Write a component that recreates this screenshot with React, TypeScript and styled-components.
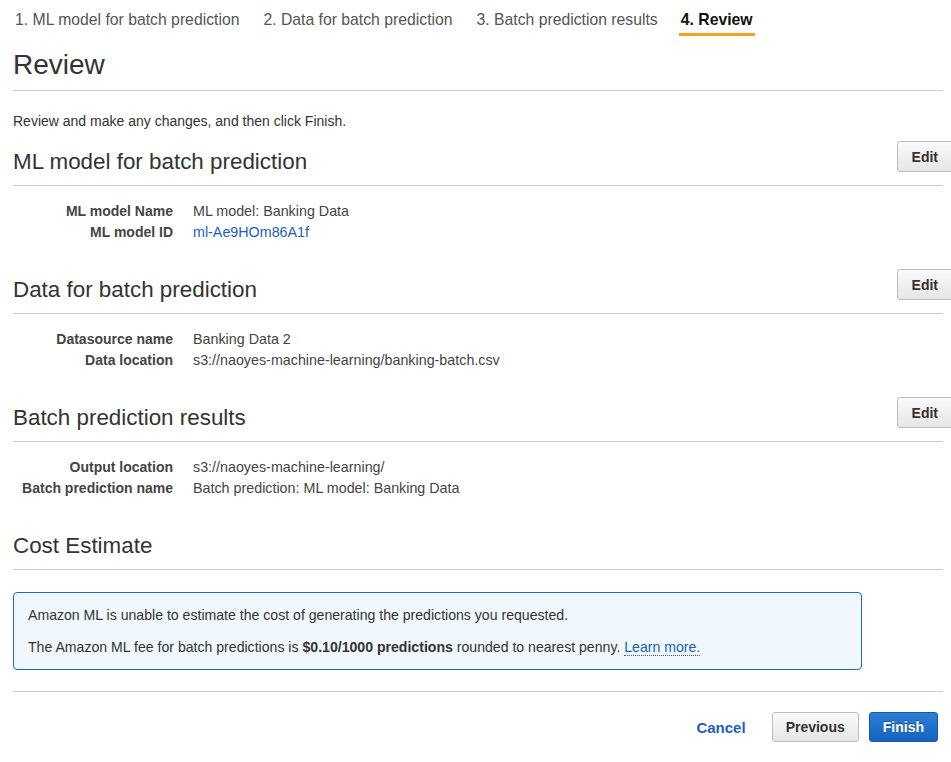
import React from "react";
import styled, { createGlobalStyle, css } from "styled-components";

const Global = createGlobalStyle`
  html, body { margin: 0; padding: 0; background: #fff; overflow: hidden; }
  body { font-family: "Liberation Sans", Arial, Helvetica, sans-serif; color: #444; }
`;

const Page = styled.div`
  width: 951px;
  box-sizing: border-box;
  padding: 10px 8px 0 13px;
`;

const Tabs = styled.nav`
  display: flex;
  gap: 18px;
  margin-left: -1px;
`;

const Tab = styled.div<{ $active?: boolean }>`
  font-size: 15.75px;
  line-height: 20px;
  padding: 0 3px 3px;
  border-bottom: 3px solid transparent;
  color: #555;
  white-space: nowrap;
  ${(p) =>
    p.$active &&
    css`
      color: #111;
      font-weight: bold;
      border-bottom-color: #f7a21b;
      padding: 0 2px 3px;
    `}
`;

const Title = styled.h1`
  margin: 13px 0 0;
  font-size: 28px;
  line-height: 32px;
  font-weight: normal;
  color: #333;
  padding-bottom: 9px;
  border-bottom: 1px solid #ccc;
`;

const Intro = styled.p`
  margin: 21px 0 0;
  font-size: 14px;
  line-height: 18px;
  color: #333;
`;

const Section = styled.section<{ $first?: boolean }>`
  margin-top: ${(p) => (p.$first ? "11px" : "26px")};
`;

const SectionHeader = styled.div`
  display: flex;
  justify-content: space-between;
  align-items: flex-end;
  min-height: 32px;
  padding-bottom: 12px;
  border-bottom: 1px solid #ccc;
`;

const SectionTitle = styled.h2`
  margin: 0;
  font-size: 22.4px;
  line-height: 24px;
  font-weight: normal;
  color: #333;
  position: relative;
  top: 1px;
`;

const Button = styled.button<{ $primary?: boolean }>`
  font-family: inherit;
  font-size: 14px;
  font-weight: bold;
  height: 30px;
  padding: 0 13px;
  border-radius: 3px;
  cursor: pointer;
  ${(p) =>
    p.$primary
      ? css`
          color: #fff;
          background: linear-gradient(#2d7fd6, #1462bd);
          border: 1px solid #145bb0;
          text-shadow: 0 -1px 0 rgba(0, 0, 0, 0.35);
        `
      : css`
          color: #333;
          background: linear-gradient(#fafafa, #e6e6e6);
          border: 1px solid #bdbdbd;
        `}
`;

const EditButton = styled(Button)`
  height: 31px;
  padding: 0 14px;
  margin-bottom: 1px;
  margin-right: -10px;
`;

const Details = styled.dl`
  display: grid;
  grid-template-columns: 160px 1fr;
  column-gap: 20px;
  margin: 15px 0 0;
  font-size: 14px;
  line-height: 21px;
`;

const Label = styled.dt`
  text-align: right;
  font-weight: bold;
  color: #444;
`;

const Value = styled.dd`
  margin: 0;
  color: #444;
  font-size: 14.3px;
`;

const Link = styled.a<{ $dotted?: boolean }>`
  color: #1a5fb8;
  text-decoration: none;
  ${(p) =>
    p.$dotted &&
    css`
      border-bottom: 1px dotted #1a5fb8;
    `}
`;

const InfoBox = styled.div`
  margin-top: 22px;
  width: 849px;
  box-sizing: border-box;
  padding: 12px 14px;
  background: #f0f7fe;
  border: 1px solid #1a6bc4;
  border-radius: 4px;
  font-size: 14.1px;
  line-height: 20px;
  color: #333;
`;

const InfoText = styled.p`
  margin: 0;
  & + & {
    margin-top: 12px;
  }
`;

const Footer = styled.div`
  margin-top: 21px;
  border-top: 1px solid #ccc;
  padding: 20px 5px 0 0;
  display: flex;
  justify-content: flex-end;
  align-items: center;
  gap: 10px;
`;

const CancelLink = styled.a`
  font-size: 15px;
  font-weight: bold;
  color: #1f5fb8;
  margin-right: 16px;
  cursor: pointer;
`;

type Row = [string, React.ReactNode];

const sections: { title: string; rows: Row[] }[] = [
  {
    title: "ML model for batch prediction",
    rows: [
      ["ML model Name", "ML model: Banking Data"],
      ["ML model ID", <Link href="#">ml-Ae9HOm86A1f</Link>],
    ],
  },
  {
    title: "Data for batch prediction",
    rows: [
      ["Datasource name", "Banking Data 2"],
      ["Data location", "s3://naoyes-machine-learning/banking-batch.csv"],
    ],
  },
  {
    title: "Batch prediction results",
    rows: [
      ["Output location", "s3://naoyes-machine-learning/"],
      ["Batch prediction name", "Batch prediction: ML model: Banking Data"],
    ],
  },
];

export default function App() {
  return (
    <Page>
      <Global />
      <Tabs>
        <Tab>1. ML model for batch prediction</Tab>
        <Tab>2. Data for batch prediction</Tab>
        <Tab>3. Batch prediction results</Tab>
        <Tab $active>4. Review</Tab>
      </Tabs>
      <Title>Review</Title>
      <Intro>Review and make any changes, and then click Finish.</Intro>
      {sections.map((s, i) => (
        <Section key={s.title} $first={i === 0}>
          <SectionHeader>
            <SectionTitle>{s.title}</SectionTitle>
            <EditButton>Edit</EditButton>
          </SectionHeader>
          <Details>
            {s.rows.map(([k, v]) => (
              <React.Fragment key={k}>
                <Label>{k}</Label>
                <Value>{v}</Value>
              </React.Fragment>
            ))}
          </Details>
        </Section>
      ))}
      <Section>
        <SectionHeader>
          <SectionTitle>Cost Estimate</SectionTitle>
        </SectionHeader>
        <InfoBox>
          <InfoText>
            Amazon ML is unable to estimate the cost of generating the predictions you requested.
          </InfoText>
          <InfoText>
            The Amazon ML fee for batch predictions is <b>$0.10/1000 predictions</b> rounded to
            nearest penny. <Link href="#" $dotted>Learn more.</Link>
          </InfoText>
        </InfoBox>
      </Section>
      <Footer>
        <CancelLink>Cancel</CancelLink>
        <Button>Previous</Button>
        <Button $primary>Finish</Button>
      </Footer>
    </Page>
  );
}
